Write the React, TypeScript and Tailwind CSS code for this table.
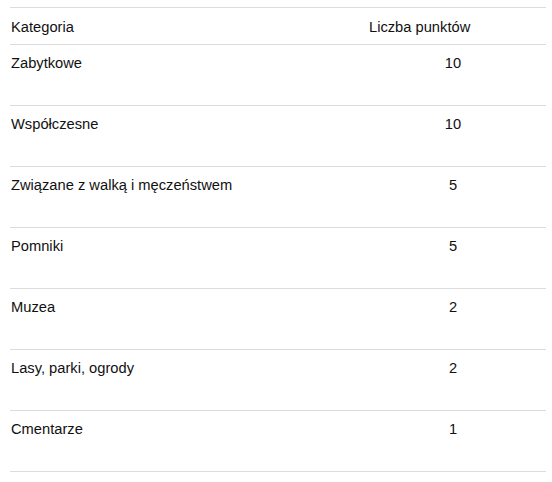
import React from "react";

const rows = [
  { name: "Zabytkowe", pts: 10 },
  { name: "Współczesne", pts: 10 },
  { name: "Związane z walką i męczeństwem", pts: 5 },
  { name: "Pomniki", pts: 5 },
  { name: "Muzea", pts: 2 },
  { name: "Lasy, parki, ogrody", pts: 2 },
  { name: "Cmentarze", pts: 1 },
];

export default function App() {
  return (
    <div className="w-[552px] h-[482px] bg-white pt-[7px] pl-[10px] font-['Liberation_Sans',Arial,sans-serif] text-[14.7px] leading-[20px] text-[#111]">
      <div className="w-[536px] border-t border-[#dcdcdc]">
        <div className="flex h-[37px] pt-[9px] border-b border-[#dcdcdc]">
          <div className="w-[359px] pl-px">Kategoria</div>
          <div>Liczba punktów</div>
        </div>
        {rows.map((r) => (
          <div key={r.name} className="flex h-[61px] pt-[8px] border-b border-[#dcdcdc]">
            <div className="w-[359px] pl-px">{r.name}</div>
            <div className="w-[168px] text-center">{r.pts}</div>
          </div>
        ))}
      </div>
    </div>
  );
}
